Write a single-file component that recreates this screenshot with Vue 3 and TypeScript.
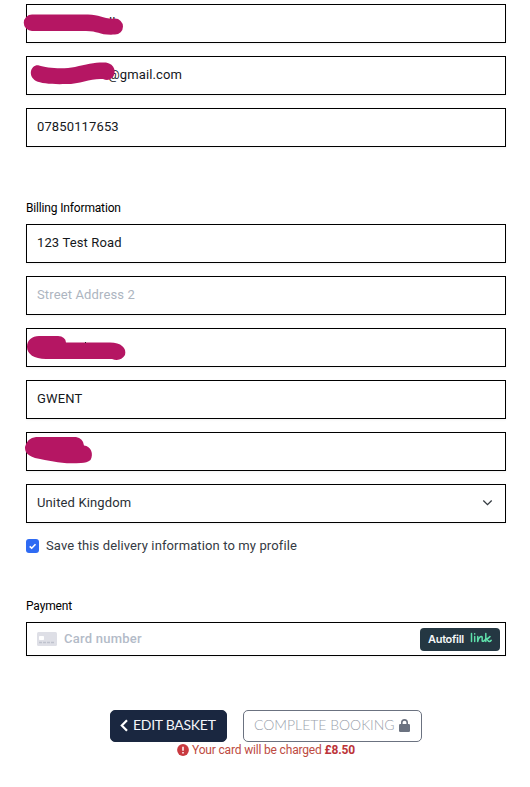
<script setup lang="ts">
interface Field {
  value?: string
  placeholder?: string
  kind?: 'name' | 'email' | 'city' | 'postcode'
}

const contactFields: Field[] = [
  { value: 'll', kind: 'name' },
  { value: '@gmail.com', kind: 'email' },
  { value: '07850117653' },
]

const billingFields: Field[] = [
  { value: '123 Test Road' },
  { placeholder: 'Street Address 2' },
  { kind: 'city' },
  { value: 'GWENT' },
  { kind: 'postcode' },
]

// Marker shapes drawn over hidden values, in the field's own coordinates
const marks: Record<string, string> = {
  name: 'M6 10.500 H62 C74 10.500 76 15 89 14.600 A8 8 0 0 1 89 30.600 C73 31.500 73 27 60 27 H6 A8 8 0 0 1 6 10.500Z',
  email: 'M13 9.500 C20 12 37 13.500 49 11 C61 8 70 6 80 6.500 C89 8 91 17 86 22 Q82 25.500 77 23 C65 22 55 28 40 28 C27 28.500 15 27.500 10 25 C1 20 5 8 13 9.500Z',
  city: 'M13 8 H32 Q39.500 8.500 40 14.500 H84 C95 14.500 101 20 99 27 Q94.500 34 86 31 H20 C8 31 1 26 1 19 C1 12 6 8 13 8Z',
  postcode: 'M10 5 H50 Q57 6 58 13.500 C65 14 68 22 64.500 28 Q61 31 55 31 C35 32.500 26 29 9 26 C0 23 -1 19 -1 15 Q1 6 10 5Z',
}
</script>

<template>
  <main class="page">
    <section class="group">
      <div v-for="(f, i) in contactFields" :key="i" class="field" :class="f.kind">
        <span>{{ f.value }}</span>
        <svg v-if="f.kind" class="mark" width="120" height="39"><path :d="marks[f.kind]" /></svg>
      </div>
    </section>

    <h2 class="heading billing">Billing Information</h2>
    <section class="group">
      <div v-for="(f, i) in billingFields" :key="i" class="field">
        <span v-if="f.value">{{ f.value }}</span>
        <span v-else-if="f.placeholder" class="placeholder">{{ f.placeholder }}</span>
        <svg v-if="f.kind" class="mark" width="120" height="39">
          <path :d="marks[f.kind]" />
          <rect v-if="f.kind === 'city'" x="59" y="14" width="1" height="1" fill="#222" />
        </svg>
      </div>
      <div class="field select">
        <span>United Kingdom</span>
        <svg width="11" height="8" viewBox="0 0 11 8"><path d="M1.300 1.500 5.500 5.700 9.700 1.500" fill="none" stroke="#343a40" stroke-width="1.300" /></svg>
      </div>
    </section>

    <div class="save">
      <svg width="13" height="14" viewBox="0 0 13 14">
        <rect width="13" height="14" rx="3" fill="#2f6bf3" />
        <path d="M3.700 7.300 5.700 9.200 9.500 5.300" fill="none" stroke="#fff" stroke-width="1.600" />
      </svg>
      <span>Save this delivery information to my profile</span>
    </div>

    <h2 class="heading payment">Payment</h2>
    <div class="field card">
      <svg width="20" height="14" viewBox="0 0 20 14">
        <rect width="20" height="14" rx="1.500" fill="#dedfe6" />
        <rect x="2" y="4" width="5" height="4" rx=".7" fill="#fff" />
        <path d="M2 10.500h16" stroke="#bfc2cd" stroke-width="1.300" stroke-dasharray="3 1" />
      </svg>
      <span class="card-label">Card number</span>
      <div class="autofill">
        <b>Autofill</b>
        <svg width="22" height="13" viewBox="0 0 22 13" fill="none" stroke="#5fe0ab" stroke-width="1.500" stroke-linecap="round" stroke-linejoin="round">
          <path d="M1.500 1.500V9.500M4.700 4.500V9.500M4.700 1.700V1.900M7.700 4.500V9.500C8.500 6.500 10 4.500 11.500 4.500 12.800 4.500 11.800 7.500 12.300 9.200 13.500 9.800 15.300 8 15.800 6.500M15.800 1.500V9.500M20 4.500C19 6 17.500 6.800 15.900 6.900 17.800 7 17.800 9.500 19.300 9.500 20.200 9.500 20.700 9 21.200 8.300" />
        </svg>
      </div>
    </div>

    <div class="actions">
      <button class="btn edit">
        <svg width="9" height="13" viewBox="0 0 9 13"><path d="M7 1.200 1.800 6.500 7 11.800" fill="none" stroke="#fff" stroke-width="2.200" /></svg>
        <span>EDIT BASKET</span>
      </button>
      <button class="btn complete">
        <span>COMPLETE BOOKING</span>
        <svg width="11" height="13" viewBox="0 0 11 13">
          <path d="M2.800 6V3.600a2.700 2.700 0 0 1 5.400 0V6" fill="none" stroke="#6b7280" stroke-width="1.600" />
          <rect y="5" width="11" height="8" rx="1.300" fill="#6b7280" />
        </svg>
      </button>
    </div>

    <p class="charge">
      <svg width="12" height="12" viewBox="0 0 12 12">
        <circle cx="6" cy="6" r="5.900" fill="#c93a40" />
        <path d="M6 2.700V6.700M6 8V9.500" stroke="#fff" stroke-width="1.500" />
      </svg>
      <span>Your card will be charged <b>£8.50</b></span>
    </p>
  </main>
</template>

<style>
body {
  background: #fff;
}
</style>

<style scoped>
.page {
  box-sizing: border-box;
  width: 530px;
  height: 787px;
  padding: 4px 24px 0 26px;
  overflow: hidden;
  font-family: Roboto, "Liberation Sans", sans-serif;
  font-size: 13px;
  color: #15181c;
}
.group {
  display: flex;
  flex-direction: column;
  gap: 13px;
}
.field {
  position: relative;
  box-sizing: border-box;
  display: flex;
  align-items: center;
  height: 39px;
  padding: 0 10px 2px;
  border: 1px solid #000;
  box-shadow: 0 1px 2px rgba(0, 0, 0, 0.06);
  letter-spacing: 0.13px;
}
.mark {
  position: absolute;
  left: -1px;
  top: -1px;
  overflow: visible;
  fill: #b51663;
}
.name {
  padding-left: 82px;
}
.email {
  padding-left: 81px;
}
.placeholder {
  color: #adb5bf;
}
.heading {
  margin: 0;
  height: 16px;
  font-size: 12px;
  line-height: 16px;
  font-weight: 400;
  letter-spacing: -0.16px;
  color: #000;
}
.billing {
  margin-top: 53px;
  margin-bottom: 8px;
}
.select {
  justify-content: space-between;
  padding-right: 12px;
  color: #2a2f35;
}
.save {
  display: flex;
  align-items: center;
  gap: 7px;
  height: 16px;
  margin-top: 15px;
  color: #343a43;
  letter-spacing: 0.12px;
}
.save span {
  padding-bottom: 2px;
}
.payment {
  margin-top: 44px;
  margin-bottom: 8px;
}
.card {
  height: 34px;
  padding: 0 5px 0 10px;
}
.card-label {
  margin-left: 7px;
  padding-bottom: 1px;
  font-weight: 500;
  letter-spacing: 0.24px;
  color: #b3bbc8;
}
.autofill {
  box-sizing: border-box;
  display: flex;
  align-items: center;
  justify-content: space-between;
  width: 80px;
  height: 23px;
  margin-left: auto;
  padding: 0 8px 1px;
  border-radius: 4px;
  background: #243742;
  color: #f4f6f7;
  font-size: 11px;
  letter-spacing: -0.3px;
  font-family: Inter, sans-serif;
}
.autofill b {
  font-weight: 600;
}
.actions {
  display: flex;
  gap: 16px;
  margin: 54px 0 0 84px;
}
.btn {
  box-sizing: border-box;
  display: flex;
  align-items: center;
  height: 32px;
  padding: 0 9px 2px;
  border: 1px solid #1a2740;
  border-radius: 5px;
  font-family: Lato, sans-serif;
  font-size: 14px;
  letter-spacing: -0.28px;
  white-space: nowrap;
}
.btn span {
  padding-bottom: 1px;
}
.edit {
  width: 117px;
  gap: 4px;
  background: #1a2740;
  color: #f4f6fa;
}
.complete {
  width: 179px;
  padding-left: 10px;
  justify-content: space-between;
  border-color: #6b7280;
  background: #fff;
  color: #9a9fab;
  font-weight: 300;
  letter-spacing: -0.02px;
}
.complete svg {
  margin-right: 2px;
}
.charge {
  display: flex;
  align-items: center;
  gap: 3px;
  height: 16px;
  margin: 0 0 0 151px;
  font-size: 12px;
  letter-spacing: -0.17px;
  color: #bd4b42;
}
.charge b {
  font-weight: 700;
  color: #bc3439;
}
</style>
